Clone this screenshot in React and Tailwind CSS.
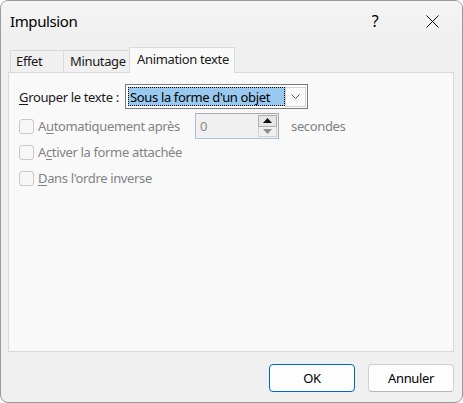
import { X } from 'lucide-react';

const font = { fontFamily: '"Noto Sans", "Open Sans", sans-serif' };

const Check = ({ children }) => (
  <div className="flex items-center gap-[4px]">
    <span className="w-[15px] h-[15px] rounded-[3px] border border-[#c9c9c9] bg-[#f7f7f7]" />
    <span className="text-[#838383]">{children}</span>
  </div>
);

const Tab = ({ label, active, className }) => (
  <div
    className={`border border-b-0 border-[#d9d9d9] ${active
      ? 'relative z-10 h-[26px] -mb-px bg-[#f9f9f9] pt-[2px]'
      : 'h-[22px] bg-[#f0f0f0] pt-[1px]'
      } ${className}`}
  >
    {label}
  </div>
);

export default function App() {
  return (
    <div className="w-[463px] h-[403px] bg-white">
      <div
        className="w-[463px] h-[403px] flex flex-col rounded-[8px] border border-[#9b9b9b] bg-[#f0f0f0] overflow-hidden text-[13px] tracking-[-0.35px] text-[#1a1a1a] leading-[18px]"
        style={font}
      >
        {/* Title bar */}
        <div className="h-[40px] flex items-center bg-linear-to-b from-[#f4f4f4] to-[#f0f0f0]">
          <span className="pl-[9px] text-[15px] tracking-[-0.4px] text-black">Impulsion</span>
          <div className="ml-auto flex items-center pr-[7px]">
            <div className="w-[46px] h-[32px] flex items-center justify-center text-[16px] text-black">?</div>
            <div className="w-[46px] h-[32px] ml-[11px] flex items-center justify-center">
              <X className="w-[23px] h-[23px] text-black" strokeWidth={1} />
            </div>
          </div>
        </div>

        {/* Tabs */}
        <div className="px-[7px] mt-[6px]">
          <div className="flex items-end h-[25px] pl-[2px]">
            <Tab label="Effet" className="w-[54px] pl-[5px]" />
            <Tab label="Minutage" className="w-[67px] -ml-px pl-[6px]" />
            <Tab label="Animation texte" active className="w-[106px] -ml-px pl-[7px]" />
          </div>

          {/* Panel */}
          <div className="w-[446px] h-[280px] border border-[#dadada] bg-[#f9f9f9] pl-[10px] pt-[11px]">
            <div className="flex items-center h-[25px]">
              <span className="w-[106px]">
                <span className="underline underline-offset-2 decoration-1">G</span>rouper le texte :
              </span>
              <div className="w-[183px] h-[25px] border border-[#7a7a7a] bg-white flex items-center pl-[2px] pr-[1px]">
                <div className="w-[158px] h-[19px] bg-[#99c9ef] border border-dotted border-black flex items-center pl-[1px] text-black">
                  Sous la forme d'un objet
                </div>
                <div className="ml-auto w-[21px] h-[20px] border border-[#d4d4d4] bg-[#fbfbfb] flex items-center justify-center">
                  <svg width="9" height="5" viewBox="0 0 9 5" fill="none">
                    <path d="M0.5 0.5 L4.5 4.5 L8.5 0.5" stroke="#555" strokeWidth="1" />
                  </svg>
                </div>
              </div>
            </div>

            <div className="flex items-center h-[26px] mt-[4px]">
              <div className="w-[176px]">
                <Check>
                  A<span className="underline underline-offset-2 decoration-1">u</span>tomatiquement après
                </Check>
              </div>
              <div className="w-[84px] h-[26px] border border-[#a8a8a8] border-l-[#a6c2e2] border-b-[#a6c2e2] bg-[#f0f0f0] flex">
                <span className="flex-1 pl-[4px] pt-[3px] text-[#8a8a8a]">0</span>
                <div className="w-[20px] flex flex-col py-px pr-px">
                  <div className="h-[12px] border border-[#adadad] bg-[#e6e6e6] flex items-center justify-center">
                    <svg width="9" height="5" viewBox="0 0 9 5">
                      <path d="M0 5 L4.5 0 L9 5 Z" fill="#111" />
                    </svg>
                  </div>
                  <div className="h-[11px] border border-t-0 border-[#d2d2d2] bg-[#efefef] flex items-center justify-center">
                    <svg width="9" height="5" viewBox="0 0 9 5">
                      <path d="M0 0 L4.5 5 L9 0 Z" fill="#8c8c8c" />
                    </svg>
                  </div>
                </div>
              </div>
              <span className="ml-[12px] text-[#838383]">secondes</span>
            </div>

            <div className="flex items-center h-[26px]">
              <Check>
                A<span className="underline underline-offset-2 decoration-1">c</span>tiver la forme attachée
              </Check>
            </div>
            <div className="flex items-center h-[26px]">
              <Check>
                <span className="underline underline-offset-2 decoration-1">D</span>ans l'ordre inverse
              </Check>
            </div>
          </div>
        </div>

        {/* Footer */}
        <div className="flex justify-end gap-[13px] pr-[8px] pt-[12px]">
          <button className="w-[86px] h-[28px] rounded-[4px] border border-[#0067c0] bg-[#fdfdfd] text-black">
            OK
          </button>
          <button className="w-[86px] h-[28px] rounded-[4px] border border-[#d0d0d0] border-b-[#b8b8b8] bg-[#fdfdfd] text-black">
            Annuler
          </button>
        </div>
      </div>
    </div>
  );
}
